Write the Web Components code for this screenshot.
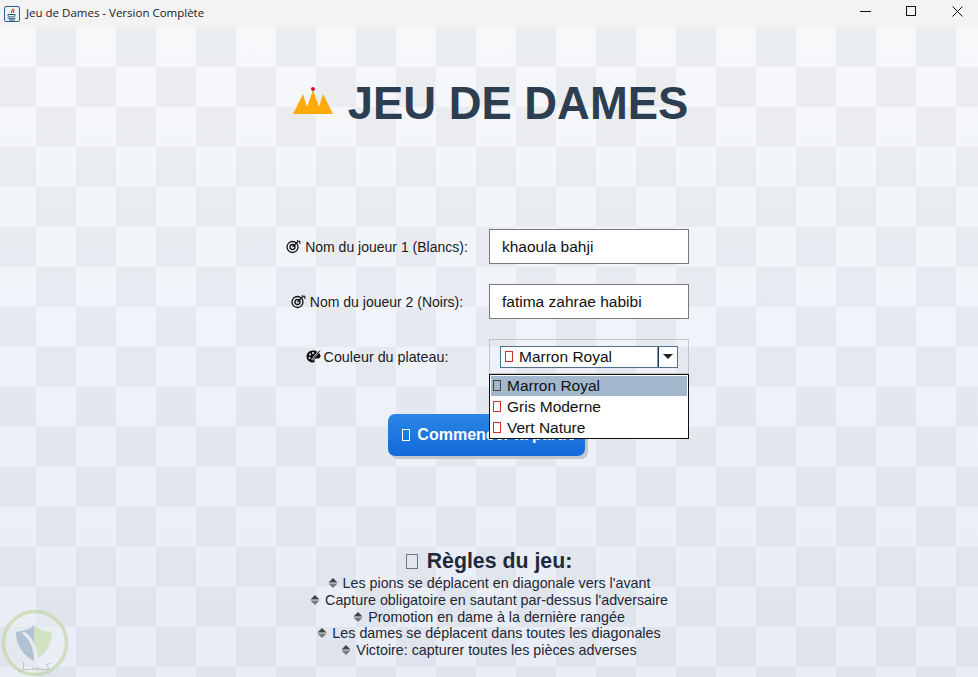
<!DOCTYPE html>
<html lang="fr">
<head>
<meta charset="utf-8">
<title>Jeu de Dames - Version Complète</title>
<style>
  html, body { margin: 0; height: 100%; }
  body { font-family: "Liberation Sans", Arial, sans-serif; overflow: hidden; }
</style>
</head>
<body>
<game-window>
  <title-bar slot="bar">Jeu de Dames - Version Complète</title-bar>
  <game-title>JEU DE DAMES</game-title>
  <player-form>
    <form-row>
      <svg-icon slot="icon" name="target"></svg-icon>
      <span slot="label">Nom du joueur 1 (Blancs):</span>
      <text-field>khaoula bahji</text-field>
    </form-row>
    <form-row>
      <svg-icon slot="icon" name="target"></svg-icon>
      <span slot="label">Nom du joueur 2 (Noirs):</span>
      <text-field>fatima zahrae habibi</text-field>
    </form-row>
    <form-row>
      <svg-icon slot="icon" name="palette" style="margin-right:-1px"></svg-icon>
      <span slot="label" style="font-size:14.300px">Couleur du plateau:</span>
      <combo-box>
        <span>Marron Royal</span>
        <span>Gris Moderne</span>
        <span>Vert Nature</span>
      </combo-box>
    </form-row>
  </player-form>
  <start-button>Commencer la partie</start-button>
  <rules-panel>
    <span slot="title">Règles du jeu:</span>
    <span>Les pions se déplacent en diagonale vers l'avant</span>
    <span>Capture obligatoire en sautant par-dessus l'adversaire</span>
    <span>Promotion en dame à la dernière rangée</span>
    <span>Les dames se déplacent dans toutes les diagonales</span>
    <span>Victoire: capturer toutes les pièces adverses</span>
  </rules-panel>
  <water-mark slot="overlay"></water-mark>
</game-window>

<script>
class GameWindow extends HTMLElement {
  constructor() {
    super();
    this.attachShadow({ mode: "open" }).innerHTML = `
      <style>
        :host { display: flex; flex-direction: column; width: 978px; height: 677px; position: relative; overflow: hidden; }
        .board {
          flex: 1; display: flex; flex-direction: column; align-items: center;
          background-image:
            conic-gradient(rgba(60,70,90,.055) 25%, transparent 0 50%, rgba(60,70,90,.055) 0 75%, transparent 0),
            linear-gradient(#f6f8fa, #e8ecf6);
          background-size: 80px 80px, 100% 100%;
          background-position: -4px 0, 0 0;
        }
      </style>
      <slot name="bar"></slot>
      <div class="board"><slot></slot></div>
      <slot name="overlay"></slot>
    `;
  }
}

class TitleBar extends HTMLElement {
  constructor() {
    super();
    this.attachShadow({ mode: "open" }).innerHTML = `
      <style>
        :host { display: flex; align-items: center; height: 27px; background: #f3f3f3; color: #1a1a1a; font: 11.500px "Open Sans", "Liberation Sans", sans-serif; flex: none; }
        .app { margin: 0 6px 0 4px; flex: none; }
        .text { flex: 1; padding-bottom: 3px; }
        .btn { width: 46px; display: flex; justify-content: center; flex: none; padding-bottom: 4px; }
      </style>
      <svg class="app" width="16" height="16" viewBox="0 0 16 16">
        <rect x=".5" y=".5" width="15" height="15" rx="1.500" fill="#eef3f8" stroke="#2f5f8f"/>
        <path d="M9 2.500c1 1.500-2.500 2.500-1.500 4.500M10.500 4c-1.500 1-1.500 1.800-1 3" fill="none" stroke="#d9381e" stroke-width="1.100"/>
        <path d="M4 8.500h7v1.200c0 .8-1 1.300-3.500 1.300S4 10.500 4 9.700zM3.500 12c2 1 6 1 8 0M5 13.800c2 .5 4 .5 6 0" fill="none" stroke="#24527f" stroke-width="1"/>
      </svg>
      <span class="text"><slot></slot></span>
      <span class="btn"><svg width="11" height="11"><path d="M0 5.500h11" stroke="#111"/></svg></span>
      <span class="btn"><svg width="11" height="11"><rect x=".5" y=".5" width="9" height="9" fill="none" stroke="#111"/></svg></span>
      <span class="btn" style="margin-right:-2px"><svg width="11" height="11"><path d="M.5.500l10 10M10.500.500l-10 10" stroke="#111"/></svg></span>
    `;
  }
}

class GameTitle extends HTMLElement {
  constructor() {
    super();
    this.attachShadow({ mode: "open" }).innerHTML = `
      <style>
        :host { display: flex; align-items: center; gap: 15px; height: 50px; margin: 52px 0 0 3px; flex: none; color: #2c3e50; font: bold 45.400px "Liberation Sans", sans-serif; white-space: nowrap; }
        svg { flex: none; margin-top: -6px; }
      </style>
      <svg width="40" height="28" viewBox="0 0 40 28">
        <path d="M0 27 10 7l4 13 6-17 6 17 4-13 10 20z" fill="#ffa90a"/>
        <circle cx="20" cy="2" r="2" fill="#d80f2b"/>
      </svg>
      <slot></slot>
    `;
  }
}

const ICONS = {
  target: `<svg width="15" height="15" viewBox="0 0 15 15" fill="none" stroke="#111">
      <circle cx="6.500" cy="8" r="5.500" stroke-width="1.300"/>
      <circle cx="6.500" cy="8" r="2.500" stroke-width="1.300"/>
      <path d="M6.500 8 12 2.500" stroke-width="1.100"/>
      <path d="M11 1l1 1.500 2-.5-.5 2 1 1" stroke-width="1"/>
    </svg>`,
  palette: `<svg width="15" height="15" viewBox="0 0 15 15">
      <path d="M7 1.500C3 1.500.5 4.300.5 7.500c0 3.500 3 6 6.500 6 1.500 0 2-1 1.500-2-.5-1.200.2-2 1.500-2h2c1.500 0 2.500-1 2.500-2.500 0-3-3.500-5.500-7.500-5.500z" fill="#111"/>
      <circle cx="4" cy="5.500" r="1" fill="#eee"/><circle cx="7" cy="4" r="1" fill="#eee"/><circle cx="3.500" cy="9" r="1" fill="#eee"/>
      <path d="M14 1 6 11" stroke="#eee" stroke-width="2"/><path d="M14 1.500 6.500 10.500" stroke="#111" stroke-width="1"/>
    </svg>`
};

class SvgIcon extends HTMLElement {
  constructor() {
    super();
    this.attachShadow({ mode: "open" });
  }
  connectedCallback() {
    this.shadowRoot.innerHTML = `
      <style>:host { display: inline-flex; flex: none; }</style>
      ${ICONS[this.getAttribute("name")]}
    `;
  }
}

class PlayerForm extends HTMLElement {
  constructor() {
    super();
    this.attachShadow({ mode: "open" }).innerHTML = `
      <style>
        :host { display: flex; flex-direction: column; gap: 20px; margin: 100px 12px 0 0; position: relative; z-index: 2; flex: none; }
      </style>
      <slot></slot>
    `;
  }
}

class FormRow extends HTMLElement {
  constructor() {
    super();
    this.attachShadow({ mode: "open" }).innerHTML = `
      <style>
        :host { display: grid; grid-template-columns: 200px 200px; column-gap: 12px; align-items: center; height: 35px; color: #1b1b1b; font: 14px "Liberation Sans", sans-serif; }
        .label { display: flex; justify-content: center; align-items: center; gap: 4px; white-space: nowrap; }
      </style>
      <div class="label"><slot name="icon"></slot><slot name="label"></slot></div>
      <slot></slot>
    `;
  }
}

class TextField extends HTMLElement {
  constructor() {
    super();
    this.attachShadow({ mode: "open" }).innerHTML = `
      <style>
        :host { display: flex; align-items: center; box-sizing: border-box; height: 35px; padding: 0 12px; background: #fff; border: 1px solid #7a7a7a; color: #111; font-size: 15.500px; }
      </style>
      <slot></slot>
    `;
  }
}

class ComboBox extends HTMLElement {
  constructor() {
    super();
    this.attachShadow({ mode: "open" });
  }
  connectedCallback() {
    const items = [...this.querySelectorAll("span")].map(s => s.textContent);
    const rows = items.map((text, i) => `<div class="item ${i === 0 ? "on" : ""}"><i class="tofu"></i>${text}</div>`).join("");
    this.shadowRoot.innerHTML = `
      <style>
        :host { display: flex; align-items: center; box-sizing: border-box; height: 35px; padding: 0 10px 0 10px; position: relative; border: 1px solid #c4c4c4; color: #111; font-size: 15.500px; }
        .box { display: flex; width: 178px; height: 22px; box-sizing: border-box; background: #fff; border: 1px solid #4f6f8f; }
        .value { flex: 1; display: flex; align-items: center; border-right: 1px solid #7f9db9; }
        .arrow { width: 18px; display: flex; align-items: center; justify-content: center; border-left: 1px solid #1f3550; }
        .arrow::after { content: ""; border: 5px solid transparent; border-top: 5px solid #222; border-bottom: 0; }
        .tofu { display: inline-block; box-sizing: border-box; width: 8px; height: 11px; border: 1px solid #d03030; margin: 0 6px 0 4px; flex: none; }
        .popup { position: absolute; left: -1px; top: 34px; width: 200px; box-sizing: border-box; padding: 1px 1px 0; background: #fff; border: 1px solid #111; }
        .item { display: flex; align-items: center; height: 21px; box-sizing: border-box; }
        .item .tofu { margin-left: 2px; margin-right: 6px; }
        .on { background: #a3b8cc; height: 20px; padding-bottom: 1px; }
        .on .tofu { border-color: #444; }
      </style>
      <div class="box"><div class="value"><i class="tofu"></i>${items[0]}</div><div class="arrow"></div></div>
      <div class="popup">${rows}</div>
    `;
  }
}

class StartButton extends HTMLElement {
  constructor() {
    super();
    this.attachShadow({ mode: "open" }).innerHTML = `
      <style>
        :host { display: flex; align-items: center; justify-content: center; gap: 7px; box-sizing: border-box; width: 197px; height: 42px; padding-left: 6px; margin: 40px 0 0 -6px; flex: none; border-radius: 7px; background: linear-gradient(#2a86e6, #1369d8); box-shadow: 3px 3px 0 #c4c8cc; color: #fff; font: bold 16px "Liberation Sans", sans-serif; white-space: nowrap; }
        i { width: 8px; height: 12px; box-sizing: border-box; border: 1.500px solid #fff; flex: none; }
      </style>
      <i></i><slot></slot>
    `;
  }
}

class RulesPanel extends HTMLElement {
  constructor() {
    super();
    this.attachShadow({ mode: "open" });
  }
  connectedCallback() {
    const lines = [...this.querySelectorAll("span:not([slot])")];
    lines.forEach(line => {
      line.style.display = "block";
      line.insertAdjacentHTML("afterbegin",
        `<svg width="10" height="10" viewBox="0 0 10 10" style="margin-right:5px"><path d="M.5 4.500 5 0l4.500 4.500z" fill="#444"/><path d="M.5 5.500h9L5 10z" fill="#777"/></svg>`);
    });
    this.shadowRoot.innerHTML = `
      <style>
        :host { display: flex; flex-direction: column; align-items: center; margin-top: 93px; flex: none; color: #1e2733; font: 14.300px/16.800px "Liberation Sans", sans-serif; text-align: center; white-space: nowrap; }
        h2 { display: flex; align-items: center; gap: 9px; margin: 0 0 2px; height: 24px; color: #1f2a3c; font: bold 21.300px "Liberation Sans", sans-serif; }
        i { width: 12px; height: 15px; box-sizing: border-box; border: 1px solid #6a7488; }
      </style>
      <h2><i></i><slot name="title"></slot></h2>
      <slot></slot>
    `;
  }
}

class WaterMark extends HTMLElement {
  constructor() {
    super();
    this.attachShadow({ mode: "open" }).innerHTML = `
      <style>
        :host { position: absolute; left: 0; top: 608px; width: 70px; height: 69px; opacity: .7; }
        svg { display: block; filter: blur(.4px); }
        text { font: 10px "DejaVu Sans", sans-serif; fill: #aeb6a8; }
      </style>
      <svg width="70" height="70" viewBox="0 0 70 70">
        <circle cx="35" cy="35" r="31.500" fill="#eef1f3" fill-opacity=".5" stroke="#c3d8a8" stroke-width="3.500"/>
        <path d="M16 24c8-1 14-3 18-7v36c-10-5-18-15-18-29z" fill="#9fb4c7"/>
        <path d="M34 17c5 4 10 6 18 7 0 14-8 24-18 29z" fill="#c8e0ad"/>
        <path d="M21 25c8 5 13 14 13 28l4-1c0-12-6-24-13-28z" fill="#e9edf2"/>
        <text x="34" y="62" text-anchor="middle" direction="rtl">كــســل</text>
      </svg>
    `;
  }
}

customElements.define("svg-icon", SvgIcon);
customElements.define("game-window", GameWindow);
customElements.define("title-bar", TitleBar);
customElements.define("game-title", GameTitle);
customElements.define("player-form", PlayerForm);
customElements.define("form-row", FormRow);
customElements.define("text-field", TextField);
customElements.define("combo-box", ComboBox);
customElements.define("start-button", StartButton);
customElements.define("rules-panel", RulesPanel);
customElements.define("water-mark", WaterMark);
</script>
</body>
</html>
